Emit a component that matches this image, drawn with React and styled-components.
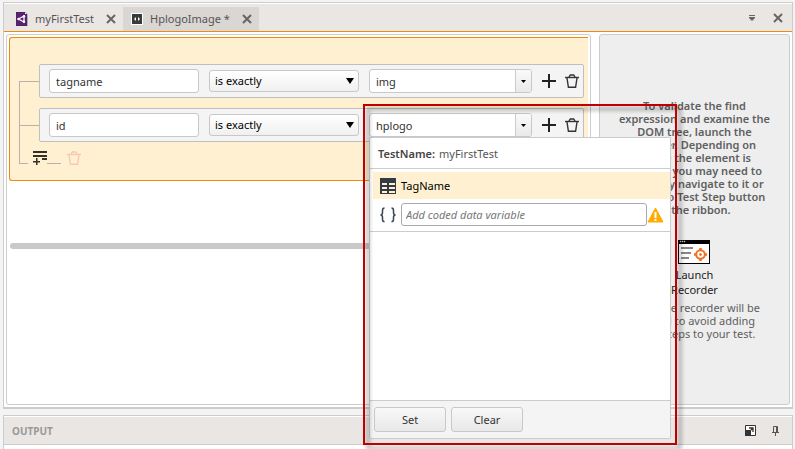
import React from "react";
import styled, { createGlobalStyle, css } from "styled-components";

const GlobalStyle = createGlobalStyle`
  *, *::before, *::after { box-sizing: border-box; }
  body {
    margin: 0;
    background: #f4f4f4;
    color: #333;
    font: 11px/14px "Noto Sans", "Open Sans", sans-serif;
  }
  button, input, select { font: inherit; color: inherit; margin: 0; }
  svg { display: block; flex: none; }
`;

const Page = styled.div`
  display: flex;
  flex-direction: column;
  gap: 6px;
  height: 100vh;
  min-height: 440px;
  padding: 2px 2px 0 3px;
  overflow: hidden;
`;

const Workspace = styled.main`
  flex: 1;
  display: flex;
  flex-direction: column;
  border: 1px solid #ccc;
  border-bottom-width: 2px;
  background: #fff;
`;

const TabBar = styled.header`
  display: flex;
  align-items: flex-end;
  height: 29px;
  border-top: 1px solid #fff;
  border-bottom: 1px solid #ef8b0c;
  background: #eae6e3;
`;

const Tab = styled.div`
  display: flex;
  align-items: center;
  height: 24px;
  padding: 0 7px 0 ${(p) => (p.$active ? 8 : 12)}px;
  background: ${(p) => (p.$active ? "#dad6d3" : "transparent")};
  color: #555;
`;

const TabButton = styled.button`
  display: flex;
  align-items: center;
  gap: 7px;
  padding: 0;
  border: 0;
  background: none;
  white-space: nowrap;
`;

const IconButton = styled.button`
  display: grid;
  place-items: center;
  flex: none;
  padding: 0;
  border: 0;
  background: none;
  color: ${(p) => p.$color || "#333"};
`;

const TabClose = styled(IconButton)`
  margin-left: 12px;
`;

const BarActions = styled.div`
  display: flex;
  align-items: center;
  align-self: center;
  gap: ${(p) => p.$gap}px;
  margin-left: auto;
  padding-right: ${(p) => p.$end}px;
`;

const Panels = styled.div`
  flex: 1;
  display: grid;
  grid-template-columns: minmax(0, 1fr) 191px;
  gap: 8px;
  padding: 2px;
`;

const panel = css`
  border: 1px solid #ccc;
  border-radius: 3px;
`;

const BuilderPanel = styled.section`
  ${panel}
  padding: 2px;
`;

const Expression = styled.div`
  padding: 26px 4px 0 9px;
  height: 144px;
  border: 1px solid #ef8b0c;
  border-right: 0;
  border-radius: 3px 0 0 3px;
  background: #fef0d0;
`;

const Branch = styled.div`
  display: grid;
  grid-template-columns: 20px minmax(0, 1fr);
`;

const Connector = styled.span`
  position: relative;
  &::before {
    content: "";
    position: absolute;
    left: 0;
    top: ${(p) => (p.$first ? "50%" : 0)};
    bottom: ${(p) => (p.$last ? "auto" : 0)};
    height: ${(p) => (p.$last ? "22px" : "auto")};
    border-left: 1px solid #b8b3a8;
  }
  &::after {
    content: "";
    position: absolute;
    left: 0;
    right: ${(p) => (p.$last ? 11 : 0)}px;
    top: ${(p) => (p.$last ? "21px" : p.$first ? "17px" : "27px")};
    border-top: 1px solid #b8b3a8;
  }
`;

const Condition = styled.div`
  display: grid;
  grid-template-columns: 150px 150px minmax(0, 1fr) auto;
  column-gap: 10px;
  align-items: center;
  height: 34px;
  margin-top: ${(p) => (p.$first ? 0 : 10)}px;
  padding: 0 4px 0 9px;
  border: 1px solid #bfbfbf;
  border-radius: 2px;
  background: #f4f4f4;
`;

const RowActions = styled.div`
  display: flex;
  gap: 9px;
`;

const field = css`
  border: 1px solid #c8c8c8;
  border-radius: 3px;
  background: #fff;
`;

const TextField = styled.input`
  ${field}
  width: 100%;
  height: 24px;
  padding: 1px 6px 0;
  outline: 0;
`;

const SelectBox = styled.div`
  display: grid;
  align-items: center;
  > * { grid-area: 1 / 1; }
  svg { justify-self: end; margin-right: 5px; pointer-events: none; }
`;

const Select = styled.select`
  ${field}
  appearance: none;
  width: 100%;
  height: 22px;
  padding: 0 20px 0 5px;
  background: linear-gradient(#fff, #f0f0f0);
  color: #000;
  outline: 0;
`;

const Combo = styled.div`
  ${field}
  position: relative;
  display: flex;
  height: 24px;
`;

const ComboInput = styled.input`
  flex: 1;
  min-width: 0;
  padding: 1px 6px 0;
  border: 0;
  background: none;
  outline: 0;
`;

const ComboToggle = styled(IconButton)`
  width: 16px;
  border-left: 1px solid #ccc;
  border-radius: 0 2px 2px 0;
  background: linear-gradient(#fafafa, #e9e9e9);
`;

const GroupTools = styled.div`
  display: flex;
  align-items: flex-start;
  padding-top: 9px;
  margin-left: -6px;
`;

const Rule = styled.span`
  width: 14px;
  margin: 12px 6px 0 0;
  border-top: 1px solid #b8b3a8;
`;

const ScrollThumb = styled.div`
  height: 6px;
  margin: 62px 1px 0;
  border-radius: 3px;
  background: #c9c9c9;
`;

const Popup = styled.div`
  position: absolute;
  z-index: 1;
  top: 23px;
  left: -1px;
  display: flex;
  flex-direction: column;
  width: 302px;
  height: 302px;
  border: 1px solid #ccc;
  border-radius: 0 0 2px 2px;
  background: #fff;
`;

const Highlight = styled.span`
  position: absolute;
  inset: -34px -7px -7px;
  border: 2px solid #c00000;
  filter: drop-shadow(4px 4px 2px rgba(0, 0, 0, 0.45));
  pointer-events: none;
`;

const PopupTitle = styled.div`
  display: flex;
  gap: 4px;
  height: 31px;
  padding: 9px 8px 0;
  border-bottom: 1px solid #ccc;
  color: #555;
  b { color: #444; font-weight: 600; }
`;

const DataRow = styled.div`
  display: flex;
  align-items: center;
  gap: 5px;
  height: 27px;
  margin: 3px 0 0 3px;
  padding-left: 7px;
  background: #fef0d0;
  color: #000;
`;

const VariableRow = styled.label`
  display: flex;
  align-items: center;
  height: 33px;
  padding: 0 6px 1px 10px;
  border-bottom: 1px solid #ccc;
  color: #444;
`;

const VariableInput = styled.input`
  flex: 1;
  min-width: 0;
  height: 23px;
  margin-left: 5px;
  padding: 0 4px;
  border: 1px solid #aaa;
  border-radius: 3px;
  outline: 0;
  &::placeholder { color: #777; font-style: italic; opacity: 1; }
`;

const PopupFooter = styled.div`
  display: flex;
  gap: 5px;
  height: 38px;
  margin-top: auto;
  padding: 6px 4px;
  border-top: 1px solid #ccc;
  background: #f4f4f4;
`;

const PushButton = styled.button`
  ${field}
  width: 72px;
  height: 25px;
  padding: 0;
  background: linear-gradient(#f8f8f8, #e8e8e8);
`;

const RecorderPanel = styled.aside`
  ${panel}
  display: flex;
  flex-direction: column;
  align-items: center;
  padding-top: 64px;
  background: #eee;
  color: #606060;
  line-height: 13px;
  text-align: center;
`;

const Message = styled.p`
  margin: 0;
  font-weight: ${(p) => (p.$strong ? 600 : 400)};
  white-space: pre-line;
`;

const LaunchButton = styled.button`
  display: flex;
  flex-direction: column;
  align-items: center;
  gap: 3px;
  margin: 24px 0 4px;
  padding: 0;
  border: 0;
  background: none;
  color: #222;
  line-height: 15px;
`;

const Output = styled.section`
  flex: none;
  height: 34px;
  border: 1px solid #ccc;
  border-bottom: 0;
  background: #fff;
`;

const OutputBar = styled.div`
  display: flex;
  align-items: center;
  height: 29px;
  padding-left: 8px;
  border-top: 1px solid #fff;
  border-bottom: 1px solid #ccc;
  background: #eae6e3;
`;

const OutputTitle = styled.h2`
  margin: 0;
  color: #999;
  font-size: 10px;
  font-weight: 700;
  line-height: 14px;
`;

const CloseIcon = () => (
  <svg width="10" height="10" viewBox="0 0 10 10" stroke="#666" strokeWidth="2" aria-hidden="true">
    <path d="M1 1 9 9M9 1 1 9" />
  </svg>
);

const StudioIcon = () => (
  <svg width="12" height="14" viewBox="0 0 12 14" aria-hidden="true">
    <path d="M0 0h9l2 2v12H0z" fill="#5b2272" stroke="#3b2a44" strokeWidth=".6" />
    <path d="M9 0v2h2z" fill="#fff" />
    <path d="M2.500 7 8 4v6z" fill="none" stroke="#fff" strokeWidth="1.300" />
    <circle cx="2.500" cy="7" r="1.200" fill="#fff" />
    <circle cx="8" cy="4.300" r="1.200" fill="#fff" />
    <circle cx="8" cy="9.800" r="1.200" fill="#fff" />
  </svg>
);

const ElementIcon = () => (
  <svg width="12" height="12" viewBox="0 0 12 12" aria-hidden="true">
    <path d="M0 0h12v12H0z" fill="#fff" />
    <path d="M1 1h10v10H1z" fill="#3a3a3a" />
    <path d="M5 4v4L3 6zM7 4v4l2-2z" fill="#fff" />
  </svg>
);

const MenuIcon = () => (
  <svg width="6" height="6" viewBox="0 0 6 6" fill="#666" aria-hidden="true">
    <path d="M0 0h6v1H0zM0 2h6v1L3 6 0 3z" />
  </svg>
);

const PlusIcon = () => (
  <svg width="14" height="14" viewBox="0 0 14 14" stroke="#222" strokeWidth="2" aria-hidden="true">
    <path d="M7 0v14M0 7h14" />
  </svg>
);

const TrashIcon = () => (
  <svg width="14" height="14" viewBox="0 0 14 14" fill="none" stroke="currentColor" aria-hidden="true">
    <path d="M0 3.500h14" strokeWidth="1.400" />
    <path d="M4 3.200 5.300 1h3.400L10 3.200" strokeWidth="1.400" />
    <path d="M2 4 3.400 13.300h7.200L12 4" strokeWidth="1.400" />
  </svg>
);

const AddGroupIcon = () => (
  <svg width="14" height="14" viewBox="0 0 14 14" fill="#333128" aria-hidden="true">
    <path d="M0 0h14v2H0zM0 4h14v2H0zM9 7h5v2H9zM3 7h1.500v3H7v1.500H4.500v3H3v-3H0V10h3z" />
  </svg>
);

const ArrowIcon = ({ width, height }) => (
  <svg width={width} height={height} viewBox="0 0 8 6" fill="#000" preserveAspectRatio="none" aria-hidden="true">
    <path d="M0 0h8L4 6z" />
  </svg>
);

const TableIcon = () => (
  <svg width="16" height="16" viewBox="0 0 16 16" aria-hidden="true">
    <path d="M0 0h16v16H0z" fill="#333b44" />
    <path d="M2 5h5v2H2zM9 5h6v2H9zM2 9h5v2H2zM9 9h6v2H9zM2 13h5v2H2zM9 13h6v2H9z" fill="#fef0d0" />
  </svg>
);

const BracesIcon = () => (
  <svg width="16" height="16" viewBox="0 0 16 16" fill="none" stroke="#3c4650" strokeWidth="1.500" aria-hidden="true">
    <path d="M4.500 1C2.500 1 2.500 2 2.500 3.500v2C2.500 7 2 7.900.5 7.900 2 7.900 2.500 8.800 2.500 10.300v2c0 1.500 0 2.500 2 2.500M11.500 1c2 0 2 1 2 2.500v2c0 1.500.5 2.400 2 2.400-1.500 0-2 .9-2 2.400v2c0 1.500 0 2.500-2 2.500" />
  </svg>
);

const WarningIcon = () => (
  <svg width="17" height="16" viewBox="0 0 17 16" aria-hidden="true">
    <path d="M8.500 1 16 15H1z" fill="#ffab00" stroke="#ffab00" strokeLinejoin="round" />
    <path d="M7.500 5h2v6h-2zM7.500 12h2v2h-2z" fill="#fff" />
  </svg>
);

const RecorderIcon = () => (
  <svg width="32" height="24" viewBox="0 0 32 24" aria-hidden="true">
    <path d="M0 0h32v24H0z" />
    <path d="M1 4h30v19H1z" fill="#fff" />
    <path d="M2 1h1v1H2zM4 1h1v1H4zM6 1h1v1H6z" fill="#fff" stroke="#aaa" strokeWidth=".5" />
    <path d="M3 7h12v2H3zM3 12h10v2H3zM3 17h8v2H3z" fill="#888" />
    <g fill="none" stroke="#f37021">
      <circle cx="22.500" cy="14.500" r="4.300" strokeWidth="2" />
      <path d="M22.500 8v3M22.500 18v3M16 14.500h3M26 14.500h3" strokeWidth="2.500" />
      <circle cx="22.500" cy="14.500" r="1" fill="#f37021" strokeWidth="1" />
    </g>
  </svg>
);

const PopOutIcon = () => (
  <svg width="11" height="11" viewBox="0 0 11 11" aria-hidden="true">
    <path d="M.5.5h10v10H.5z" fill="#fff" stroke="#333" />
    <path d="M0 5h6v6H0z" fill="#333" />
    <path d="M4 3h4v4M8 3 6 5" fill="none" stroke="#333" strokeWidth="1.300" />
  </svg>
);

const PinIcon = () => (
  <svg width="7" height="10" viewBox="0 0 7 10" fill="none" stroke="#555" aria-hidden="true">
    <path d="M1.500 6V.5h4V6M4.500 1v5M0 6.500h7M3.500 7v3" />
  </svg>
);

function ConditionRow({ name, value, first, children }) {
  return (
    <Branch>
      <Connector $first={first} />
      <Condition $first={first}>
        <TextField defaultValue={name} aria-label="Attribute" />
        <SelectBox>
          <Select defaultValue="is exactly" aria-label={`${name} comparison`}>
            <option>is exactly</option>
            <option>contains</option>
          </Select>
          <ArrowIcon width={8} height={6} />
        </SelectBox>
        <Combo>
          <ComboInput defaultValue={value} aria-label={`${name} value`} />
          <ComboToggle aria-label={`Choose data for ${name}`}>
            <ArrowIcon width={5} height={3} />
          </ComboToggle>
          {children}
        </Combo>
        <RowActions>
          <IconButton aria-label="Add condition"><PlusIcon /></IconButton>
          <IconButton aria-label="Delete condition"><TrashIcon /></IconButton>
        </RowActions>
      </Condition>
    </Branch>
  );
}

function DataPopup() {
  return (
    <Popup role="dialog" aria-label="Data binding">
      <PopupTitle><b>TestName:</b><span>myFirstTest</span></PopupTitle>
      <DataRow><TableIcon />TagName</DataRow>
      <VariableRow>
        <BracesIcon />
        <VariableInput placeholder="Add coded data variable" aria-label="Coded data variable" />
        <WarningIcon />
      </VariableRow>
      <PopupFooter>
        <PushButton>Set</PushButton>
        <PushButton>Clear</PushButton>
      </PopupFooter>
      <Highlight />
    </Popup>
  );
}

export default function App() {
  return (
    <>
      <GlobalStyle />
      <Page>
        <Workspace>
          <TabBar>
            <Tab>
              <TabButton><StudioIcon />myFirstTest</TabButton>
              <TabClose aria-label="Close myFirstTest"><CloseIcon /></TabClose>
            </Tab>
            <Tab $active>
              <TabButton><ElementIcon />HplogoImage *</TabButton>
              <TabClose aria-label="Close HplogoImage"><CloseIcon /></TabClose>
            </Tab>
            <BarActions $gap={18} $end={9}>
              <IconButton aria-label="Tab list"><MenuIcon /></IconButton>
              <IconButton aria-label="Close"><CloseIcon /></IconButton>
            </BarActions>
          </TabBar>
          <Panels>
            <BuilderPanel>
              <Expression>
                <ConditionRow name="tagname" value="img" first />
                <ConditionRow name="id" value="hplogo">
                  <DataPopup />
                </ConditionRow>
                <Branch>
                  <Connector $last />
                  <GroupTools>
                    <IconButton aria-label="Add group"><AddGroupIcon /></IconButton>
                    <Rule />
                    <IconButton $color="#f8c9ae" aria-label="Delete group"><TrashIcon /></IconButton>
                  </GroupTools>
                </Branch>
              </Expression>
              <ScrollThumb />
            </BuilderPanel>
            <RecorderPanel>
              <Message $strong>
                {"To validate the find\nexpression and examine the\nDOM tree, launch the\nbrowser. Depending on\nwhere the element is\nlocated, you may need to\nmanually navigate to it or\nuse Go to Test Step button\nin the ribbon."}
              </Message>
              <LaunchButton>
                <RecorderIcon />
                <span>Launch<br />Recorder</span>
              </LaunchButton>
              <Message>
                {"Note: the recorder will be\npaused to avoid adding\nextra steps to your test."}
              </Message>
            </RecorderPanel>
          </Panels>
        </Workspace>
        <Output>
          <OutputBar>
            <OutputTitle>OUTPUT</OutputTitle>
            <BarActions $gap={16} $end={13}>
              <IconButton aria-label="Float panel"><PopOutIcon /></IconButton>
              <IconButton aria-label="Pin panel"><PinIcon /></IconButton>
            </BarActions>
          </OutputBar>
        </Output>
      </Page>
    </>
  );
}
